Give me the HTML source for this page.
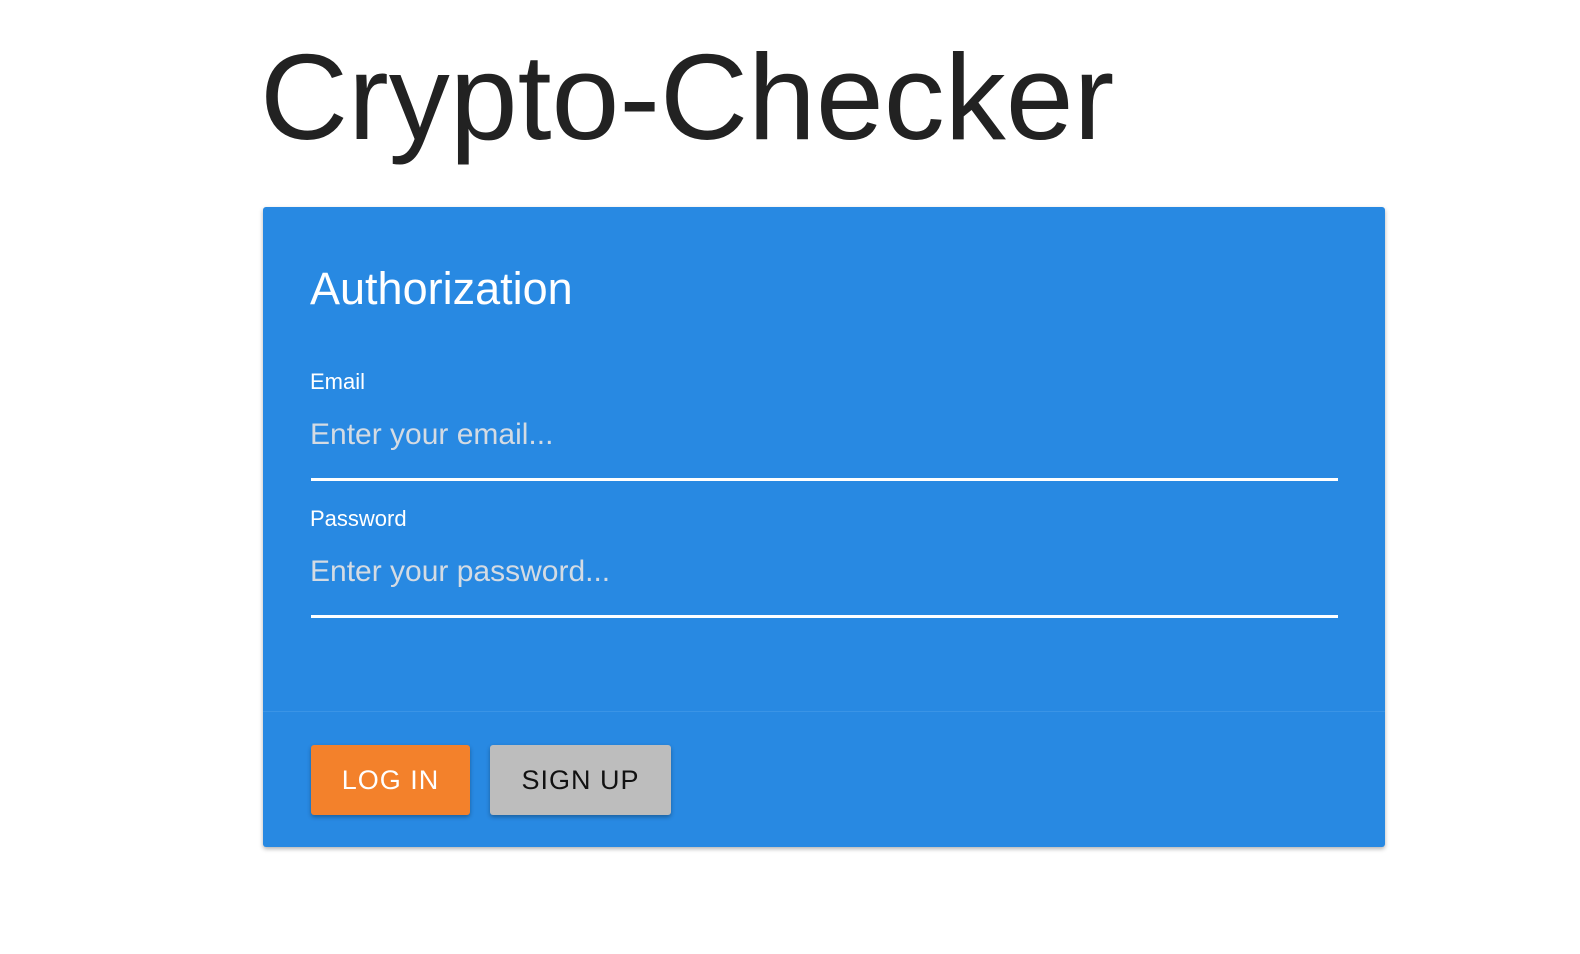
<!DOCTYPE html>
<html><head><style>
body{margin:0;background:#fff;width:1580px;height:954px;overflow:hidden;font-family:"Liberation Sans",Arial,sans-serif;position:relative}
h1{position:absolute;left:260px;top:27px;margin:0;font-weight:400;font-size:122px;line-height:140px;color:#222;white-space:nowrap}
.card{position:absolute;left:263px;top:207px;width:1122px;height:640px;background:#2889e2;border-radius:3px;box-shadow:0 2px 4px rgba(0,0,0,.3)}
.t{position:absolute;left:47px;top:56px;font-size:45px;color:#fff;line-height:52px}
.lab{position:absolute;left:47px;font-size:22px;color:#fff}
.ph{position:absolute;left:47px;font-size:30px;color:#d4dbe3}
.ln{position:absolute;left:48px;width:1027px;height:3px;background:#fff}
.div{position:absolute;left:0;right:0;top:504px;height:1px;background:#3a94e6}
.btn{position:absolute;top:538px;height:70px;border-radius:3px;font-size:27px;letter-spacing:1px;display:flex;align-items:center;justify-content:center;box-shadow:0 2px 4px rgba(0,0,0,.3)}
</style></head><body>
<h1>Crypto-Checker</h1>
<div class="card">
<div class="t">Authorization</div>
<div class="lab" style="top:162px">Email</div>
<div class="ph" style="top:211px">Enter your email...</div>
<div class="ln" style="top:271px"></div>
<div class="lab" style="top:299px">Password</div>
<div class="ph" style="top:348px">Enter your password...</div>
<div class="ln" style="top:408px"></div>
<div class="div"></div>
<div class="btn" style="left:48px;width:159px;background:#f3812b;color:#fff">LOG IN</div>
<div class="btn" style="left:227px;width:181px;background:#bdbdbd;color:#111">SIGN UP</div>
</div>
</body></html>
